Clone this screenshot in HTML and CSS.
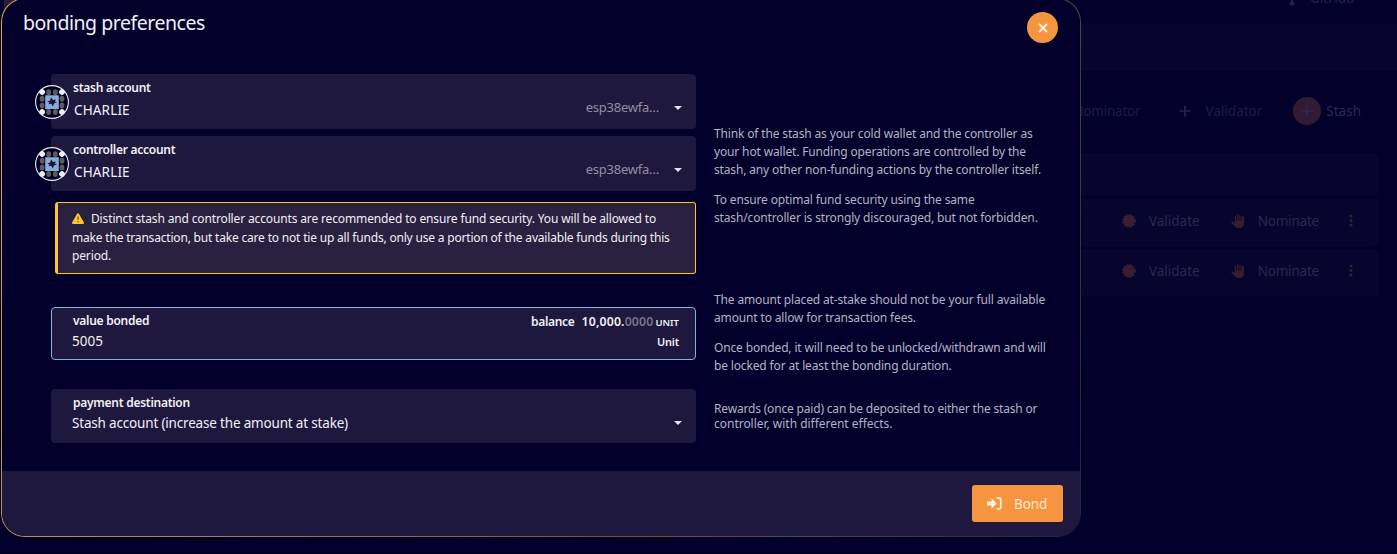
FILE: index.html
```html
<!DOCTYPE html>
<html lang="en">
<head>
<meta charset="utf-8">
<title>bonding preferences</title>
<link rel="stylesheet" href="styles.css">
</head>
<body>
<svg class="defs" width="0" height="0">
  <symbol id="identicon" viewBox="0 0 34 34">
    <circle cx="17" cy="17" r="16.4" fill="#02002b" stroke="#e9e9ee" stroke-width="1.1"/>
    <g fill="#5c5c5a"><ellipse cx="13.7" cy="7.2" rx="2.4" ry="3"/><ellipse cx="20.3" cy="7.2" rx="2.4" ry="3"/><ellipse cx="13.7" cy="27" rx="2.4" ry="3"/><ellipse cx="20.3" cy="27" rx="2.4" ry="3"/><ellipse cx="7.1" cy="13.8" rx="2.4" ry="3"/><ellipse cx="7.1" cy="20.4" rx="2.4" ry="3"/><ellipse cx="27" cy="13.8" rx="2.4" ry="3"/><ellipse cx="27" cy="20.4" rx="2.4" ry="3"/></g>
    <path fill="#eeeef0" d="M7.1 3.7l3.3 3.3-3.3 3.3-3.3-3.3zM27 3.7l3.3 3.3-3.3 3.3-3.3-3.3zM7.1 23.7l3.3 3.3-3.3 3.3-3.3-3.3zM27 23.7l3.3 3.3-3.3 3.3-3.3-3.3z"/>
    <circle cx="7.1" cy="7" r="2.7" fill="#eeeef0"/><circle cx="27" cy="7" r="2.7" fill="#eeeef0"/><circle cx="7.1" cy="27" r="2.7" fill="#eeeef0"/><circle cx="27" cy="27" r="2.7" fill="#eeeef0"/>
    <path fill="#86acda" d="M10.2 10.2h13.6v13.8H10.2z"/>
    <path fill="#1c1740" d="M16 12.2L18 15l2.700-.6-.7 2 2.200 1-2.700.7-1.900 3.400-1.300-2.700-3 .5 1.200-2-2.500-.7 3.200-1z"/>
  </symbol>
  <symbol id="badge" viewBox="0 0 14 14">
    <circle cx="7" cy="7" r="5.9" fill="currentColor"/>
    <circle cx="7" cy="7" r="6.2" fill="none" stroke="currentColor" stroke-width="1.6" stroke-dasharray="1.9 1.35"/>
  </symbol>
  <symbol id="hand" viewBox="0 0 512 512">
    <path fill="currentColor" d="M409 80c-14 0-25 11-25 25v135c0 9-7 16-16 16s-16-7-16-16V57c0-14-11-25-25-25s-25 11-25 25v183c0 9-7 16-16 16s-16-7-16-16V25c0-14-11-25-25-25s-25 11-25 25v215c0 9-7 16-16 16s-16-7-16-16V89c0-14-11-25-25-25s-25 11-25 25v247l-66-60c-14-14-36-14-50 0s-14 36 0 50l118 119c42 42 100 67 160 67h12c98 0 164-74 164-164V105c0-14-11-25-25-25z"/>
  </symbol>
  <symbol id="plus" viewBox="0 0 12 12"><path d="M6 .5v11M.5 6h11" stroke="currentColor" stroke-width="1.7" fill="none"/></symbol>
  <symbol id="dots" viewBox="0 0 4 14"><g fill="currentColor"><circle cx="2" cy="2" r="1.6"/><circle cx="2" cy="6.5" r="1.6"/><circle cx="2" cy="11" r="1.6"/></g></symbol>
</svg>

<div class="page">
  <div class="page-menu"><i class="logo"></i><svg class="branch" viewBox="0 0 8 12"><path d="M4 0v9" stroke="currentColor" stroke-width="2"/><circle cx="4" cy="9.5" r="2.3" fill="currentColor"/></svg><span>GitHub</span></div>
  <div class="page-tabs"></div>
  <div class="page-buttons">
    <span class="nominator">Nominator</span>
    <span class="validator"><svg class="plus"><use href="#plus"/></svg><span>Validator</span></span>
    <span class="stash"><span class="disc"><svg class="plus"><use href="#plus"/></svg></span><span>Stash</span></span>
  </div>
  <div class="page-rows">
    <div class="page-row head"></div>
    <div class="page-row"><svg class="ico"><use href="#badge"/></svg><span class="t1">Validate</span><svg class="ico"><use href="#hand"/></svg><span class="t2">Nominate</span><svg class="dots"><use href="#dots"/></svg></div>
    <div class="page-row"><svg class="ico"><use href="#badge"/></svg><span class="t1">Validate</span><svg class="ico"><use href="#hand"/></svg><span class="t2">Nominate</span><svg class="dots"><use href="#dots"/></svg></div>
  </div>
</div>

<div class="modal">
  <div class="modal-inner">
    <header class="modal-head">
      <h1>bonding preferences</h1>
      <button class="close" aria-label="Close"><svg width="10" height="10" viewBox="0 0 10 10"><path d="M1 1l8 8M9 1L1 9" stroke="#fff3e6" stroke-width="1.8"/></svg></button>
    </header>
    <main class="modal-body">
      <section class="row accounts">
        <div class="fields">
          <div class="field account">
            <svg class="identicon"><use href="#identicon"/></svg>
            <div class="text"><label>stash account</label><span class="name">CHARLIE</span></div>
            <span class="addr">esp38ewfa…</span><i class="caret"></i>
          </div>
          <div class="field account">
            <svg class="identicon"><use href="#identicon"/></svg>
            <div class="text"><label>controller account</label><span class="name">CHARLIE</span></div>
            <span class="addr">esp38ewfa…</span><i class="caret"></i>
          </div>
          <div class="warning">
            <div class="wl1"><svg class="tri" viewBox="0 0 12 11"><path d="M6 .2c.4 0 .7.2.9.5l5 8.7c.4.8-.1 1.6-.9 1.6H1c-.8 0-1.3-.8-.9-1.6l5-8.7c.2-.3.5-.5.9-.5z" fill="#ffc62b"/><path d="M6 3.4v3.4M6 7.9v1.4" stroke="#6b5836" stroke-width="1.3"/></svg><span>Distinct stash and controller accounts are recommended to ensure fund security. You will be allowed to</span></div>
            <div class="wl2">make the transaction, but take care to not tie up all funds, only use a portion of the available funds during this</div>
            <div>period.</div>
          </div>
        </div>
        <aside class="hint h1">
          <p>Think of the stash as your cold wallet and the controller as<br>your hot wallet. Funding operations are controlled by the<br>stash, any other non-funding actions by the controller itself.</p>
          <p>To ensure optimal fund security using the same<br>stash/controller is strongly discouraged, but not forbidden.</p>
        </aside>
      </section>
      <section class="row value">
        <div class="field input">
          <div class="line"><label>value bonded</label><span class="balance"><b>balance</b><b class="num">10,000.<span>0000</span></b><b class="unit">UNIT</b></span></div>
          <div class="line second"><span class="name">5005</span><b class="unit2">Unit</b></div>
        </div>
        <aside class="hint h2">
          <p>The amount placed at-stake should not be your full available<br>amount to allow for transaction fees.</p>
          <p>Once bonded, it will need to be unlocked/withdrawn and will<br>be locked for at least the bonding duration.</p>
        </aside>
      </section>
      <section class="row payment">
        <div class="field select">
          <div class="text"><label>payment destination</label><span class="name">Stash account (increase the amount at stake)</span></div>
          <i class="caret"></i>
        </div>
        <aside class="hint h3"><p>Rewards (once paid) can be deposited to either the stash or<br><span class="wide">controller, with different effects.</span></p></aside>
      </section>
    </main>
    <footer class="modal-foot">
      <button class="bond"><svg width="15" height="13" viewBox="0 0 15 13"><path d="M0 4.4h4.5V1.3L9.8 6.5 4.5 11.7V8.6H0z" fill="#ffeedd"/><path d="M9.7 1.2h2.6c.9 0 1.5.6 1.5 1.5v7.6c0 .9-.6 1.5-1.5 1.5H9.7" fill="none" stroke="#ffeedd" stroke-width="1.8"/></svg><span>Bond</span></button>
    </footer>
  </div>
</div>
</body>
</html>
```
FILE: styles.css
```css
* { box-sizing: border-box; }
body { margin: 0; width: 1397px; height: 554px; overflow: hidden; background: #02002b; font-family: "Noto Sans", sans-serif; font-size: 13.5px; color: #f1f0f4; position: relative; }
h1, p { margin: 0; }
.defs { position: absolute; }
svg { flex: none; display: block; }
button { border: 0; padding: 0; font: inherit; }

.page { height: 554px; display: flex; flex-direction: column; color: #24214c; border-bottom: 1px solid #010016; }
.page-menu { height: 24px; display: flex; padding-left: 4px; line-height: 18px; }
.logo { width: 40px; height: 14px; background: #2a1f33; margin-right: 1244px; }
.page-menu span { margin: -11px 0 0 14px; letter-spacing: -0.1px; }
.branch { width: 8px; height: 12px; margin-top: -6px; }
.page-tabs { height: 47px; background: #07042d; }
.page-buttons { height: 82px; display: flex; justify-content: flex-end; align-items: center; padding-right: 36px; padding-bottom: 2px; }
.plus { width: 12px; height: 12px; }
.nominator { color: #1f1c43; letter-spacing: -0.2px; margin-right: 1px; }
.validator { display: flex; align-items: center; gap: 14px; margin-left: 38px; color: #1f1c43; }
.validator .plus { color: #28254f; }
.stash { display: flex; align-items: center; gap: 5px; margin-left: 31px; color: #2d2a52; }
.disc { width: 28px; height: 28px; border-radius: 50%; background: #331a33; display: grid; place-items: center; }
.page-rows { display: flex; flex-direction: column; gap: 3px; padding-right: 18px; }
.page-row { height: 47px; display: flex; align-items: center; justify-content: flex-end; background: #07042d; border-radius: 0 4px 4px 0; padding: 0 26px 3px 0; color: #371e33; }
.page-row.head { height: 43px; }
.page-row span { color: #2a274f; margin-left: 13px; letter-spacing: -0.2px; }
.ico { width: 14px; height: 14px; }
.page-row .t1 { margin-right: 31px; letter-spacing: 0; }
.t2 { margin-right: 30px; }
.dots { width: 4px; height: 14px; }

.modal { position: absolute; left: 1px; top: -2px; width: 1080px; height: 539px; border-radius: 24px; padding: 1px; background: linear-gradient(115deg, #d4ad55 0%, #a98958 30%, #755d3c 60%, #5b4939 78%, #252039 100%); }
.modal-inner { height: 537px; border-radius: 23px; background: #02002b; overflow: hidden; display: flex; flex-direction: column; }
.modal-head { height: 75px; flex: none; display: flex; justify-content: space-between; padding: 0 22px 0 21px; }
h1 { font-weight: 400; font-size: 19.5px; line-height: 28px; margin-top: 10px; letter-spacing: -0.47px; }
.close { width: 31px; height: 31px; border-radius: 50%; background: #f6953f; margin-top: 13px; display: grid; place-items: center; }
.modal-body { flex: 1; padding-left: 49px; display: flex; flex-direction: column; }
.row { display: grid; grid-template-columns: 645px 1fr; column-gap: 18px; }
.accounts { height: 233px; }
.value { height: 82px; }
.field { background: #1e183e; border-radius: 4px; }
.account { height: 55px; margin-bottom: 7px; display: flex; position: relative; padding: 5px 14px 0 22px; }
.identicon { position: absolute; left: -16px; top: 11px; width: 34px; height: 34px; }
.text { flex: 1; display: flex; flex-direction: column; }
label { font-weight: 600; font-size: 12px; line-height: 18px; letter-spacing: -0.27px; white-space: nowrap; }
.name { font-size: 13.5px; line-height: 20px; white-space: nowrap; }
.account .name { margin: 3px 0 0 1px; letter-spacing: 0.15px; }
.addr { color: #918ea3; font-size: 13px; line-height: 20px; margin-top: 18px; letter-spacing: -0.25px; }
.caret { width: 0; height: 0; border: 4px solid transparent; border-top-color: #e4e2ea; border-bottom: 0; margin: 27px 0 0 15px; }
.warning { margin: 11px 0 0 4px; padding: 7px 0 0 14px; width: 641px; height: 72px; border: 1px solid #ffc62b; border-left-width: 3px; border-radius: 3px; background: #2a203f; font-size: 12px; line-height: 18.6px; letter-spacing: -0.14px; white-space: nowrap; }
.wl1 { display: flex; align-items: center; }
.warning .wl2 { letter-spacing: -0.19px; }
.tri { width: 12px; height: 11px; margin: -2px 7px 0 0; }
.hint { font-size: 12px; line-height: 18px; color: #b5b3c1; letter-spacing: -0.15px; white-space: nowrap; }
.hint p + p { margin-top: 12px; }
.hint.h1 { padding-top: 51px; }
.hint.h2 { margin-top: -16px; }
.hint.h3 { padding-top: 12px; line-height: 15px; letter-spacing: -0.18px; }
.wide { letter-spacing: -0.02px; }
.input { height: 53px; border: 1px solid #7db5db; padding: 4px 16px 0 20px; }
.input label { margin-left: 1px; }
.line { display: flex; justify-content: space-between; align-items: center; height: 18px; }
.line b { font-weight: 600; }
.second { height: 22px; }
.balance { display: flex; align-items: baseline; font-size: 12px; line-height: 18px; margin-top: 2px; letter-spacing: -0.3px; }
.num { margin: 0 2px 0 7px; letter-spacing: 0.16px; font-size: 12.3px; }
.num span { color: #77738b; }
.balance .unit { font-size: 9.5px; letter-spacing: 0; }
.unit2 { font-size: 11px; letter-spacing: -0.2px; }
.select { height: 54px; display: flex; padding: 5px 14px 0 21px; }
.select label { margin-left: 1px; }
.select .name { margin-top: 1px; letter-spacing: -0.18px; }
.modal-foot { height: 65px; flex: none; background: #1e183e; display: flex; justify-content: flex-end; padding: 14px 17px 0 0; }
.bond { width: 91px; height: 37px; border-radius: 3px; background: #f6953f; color: #ffe9d3; display: flex; align-items: center; padding-left: 15px; gap: 12px; font-size: 13.5px; letter-spacing: -0.1px; }
```
